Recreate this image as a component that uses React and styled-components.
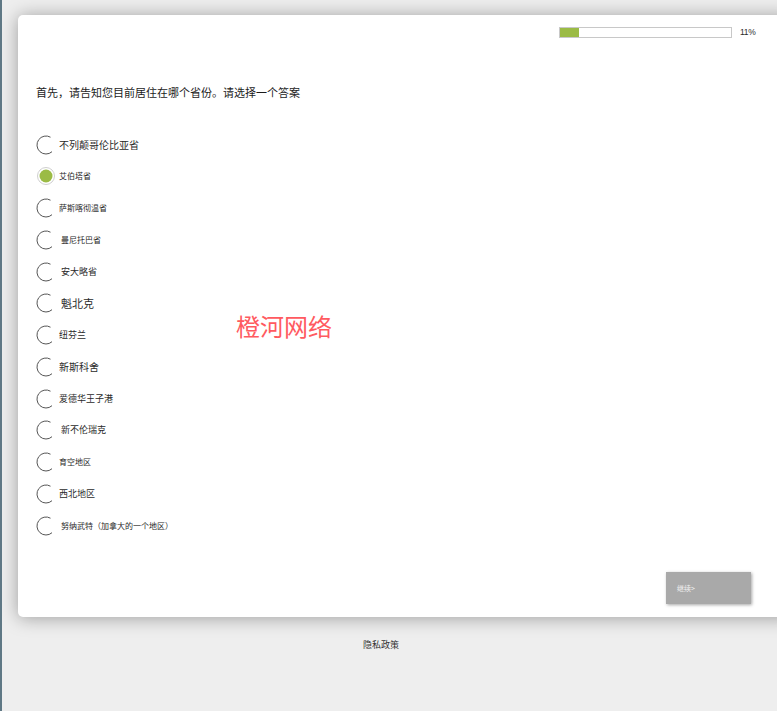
import React from "react";
import styled, { createGlobalStyle } from "styled-components";

const GlobalStyle = createGlobalStyle`
  html, body {
    margin: 0;
    padding: 0;
    height: 100%;
    background: #eeeeee;
  }
  * {
    box-sizing: border-box;
  }
`;

const Page = styled.div`
  position: relative;
  width: 777px;
  height: 711px;
  overflow: hidden;
  padding: 15px 0 0 16px;
  background: #eeeeee;
  border-left: 2px solid #5f7885;
  font-family: "Noto Sans CJK SC", "Liberation Sans", sans-serif;
  color: #2b2b2b;
`;

const Card = styled.main`
  display: flex;
  flex-direction: column;
  width: 775px;
  height: 602px;
  padding: 11px 42px 13px 18px;
  background: #ffffff;
  border-radius: 5px;
  box-shadow: 0 1px 18px rgba(0, 0, 0, 0.34);
`;

const ProgressRow = styled.div`
  display: flex;
  justify-content: flex-end;
  align-items: center;
  gap: 8px;
  height: 12px;
  margin-right: -4px;
`;

const ProgressTrack = styled.div`
  width: 173px;
  height: 11px;
  background: #ffffff;
  border: 1px solid #c8c8c8;
`;

const ProgressFill = styled.div`
  height: 100%;
  background: #9bbb45;
`;

const ProgressLabel = styled.span`
  width: 15px;
  font-family: "Liberation Sans", sans-serif;
  font-size: 8.5px;
  letter-spacing: -0.3px;
  line-height: 12px;
  white-space: nowrap;
`;

const Question = styled.h1`
  margin: 46px 0 0;
  font-size: 11px;
  font-weight: 400;
  line-height: 16px;
  color: #1c1c1c;
`;

const Options = styled.div`
  display: flex;
  flex-direction: column;
  margin-top: 28.7px;
`;

const Option = styled.label`
  display: flex;
  align-items: center;
  height: 31.75px;
`;

const Ring = styled.svg`
  flex: none;
  width: 20px;
  height: 20px;
`;

const OptionText = styled.span`
  margin-left: ${(p) => p.$gap}px;
  font-size: ${(p) => p.$size}px;
  line-height: 14px;
  white-space: nowrap;
  color: #2a2a2a;
`;

const Actions = styled.div`
  display: flex;
  justify-content: flex-end;
  margin-top: auto;
`;

const NextButton = styled.button`
  width: 85px;
  height: 32px;
  padding: 0 0 0 11px;
  border: 0;
  background: #a9a9a9;
  box-shadow: 1px 1px 3px rgba(0, 0, 0, 0.35);
  color: #f2f2f2;
  font-family: inherit;
  font-size: 7px;
  text-align: left;
`;

const Footer = styled.footer`
  padding: 21px 33px 0 0;
  font-size: 9px;
  line-height: 14px;
  text-align: center;
  color: #333333;
`;

const Watermark = styled.div`
  position: absolute;
  left: 234px;
  top: 309px;
  font-size: 24px;
  line-height: 34px;
  color: #ff5a60;
  white-space: nowrap;
`;

const provinces = [
  { name: "不列颠哥伦比亚省", size: 10, gap: 3 },
  { name: "艾伯塔省", size: 8, gap: 3, checked: true },
  { name: "萨斯喀彻温省", size: 8, gap: 3 },
  { name: "曼尼托巴省", size: 8, gap: 5 },
  { name: "安大略省", size: 9, gap: 5 },
  { name: "魁北克", size: 11, gap: 5 },
  { name: "纽芬兰", size: 9, gap: 3 },
  { name: "新斯科舍", size: 10, gap: 3 },
  { name: "爱德华王子港", size: 9, gap: 3 },
  { name: "新不伦瑞克", size: 9, gap: 5 },
  { name: "育空地区", size: 8, gap: 3 },
  { name: "西北地区", size: 9, gap: 3 },
  { name: "努纳武特（加拿大的一个地区）", size: 8, gap: 5 },
];

const RadioIcon = ({ checked }) =>
  checked ? (
    <Ring viewBox="0 0 20 20">
      <circle cx="10" cy="10" r="8.5" fill="none" stroke="#cfcfcf" strokeWidth="1" />
      <circle cx="10" cy="10" r="6.5" fill="#9bbb45" />
    </Ring>
  ) : (
    <Ring viewBox="0 0 20 20">
      <path
        d="M14.5 2.2A9 9 0 1 0 16 16.7"
        fill="none"
        stroke="#555555"
        strokeWidth="1"
      />
    </Ring>
  );

export default function App() {
  return (
    <Page>
      <GlobalStyle />
      <Card>
        <ProgressRow>
          <ProgressTrack>
            <ProgressFill style={{ width: "11%" }} />
          </ProgressTrack>
          <ProgressLabel>11%</ProgressLabel>
        </ProgressRow>
        <Question>首先，请告知您目前居住在哪个省份。请选择一个答案</Question>
        <Options>
          {provinces.map((p) => (
            <Option key={p.name}>
              <RadioIcon checked={p.checked} />
              <OptionText $size={p.size} $gap={p.gap}>
                {p.name}
              </OptionText>
            </Option>
          ))}
        </Options>
        <Actions>
          <NextButton>继续&gt;</NextButton>
        </Actions>
      </Card>
      <Footer>隐私政策</Footer>
      <Watermark>橙河网络</Watermark>
    </Page>
  );
}
